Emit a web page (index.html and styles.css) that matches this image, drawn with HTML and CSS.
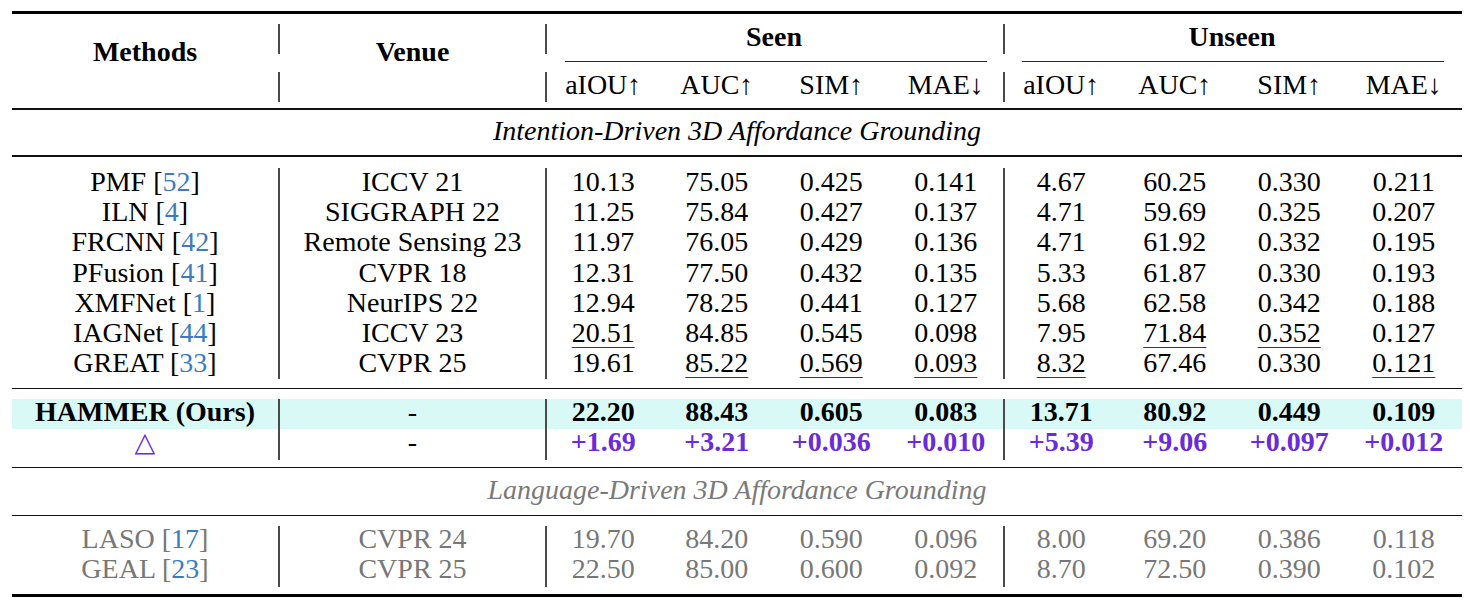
FILE: index.html
```html
<!DOCTYPE html>
<html>
<head>
<meta charset="utf-8">
<link rel="stylesheet" href="styles.css">
</head>
<body>
<div class="tbl">
  <div class="rule-thick top"></div>

  <div class="hd">
    <div class="h-meth">Methods</div>
    <div class="h-venue">Venue</div>
    <div class="h-seen">Seen</div>
    <div class="h-unseen">Unseen</div>
    <div class="cmid cmid-seen"></div>
    <div class="cmid cmid-unseen"></div>
    <div class="m c3">aIOU↑</div>
    <div class="m c4">AUC↑</div>
    <div class="m c5">SIM↑</div>
    <div class="m c6">MAE↓</div>
    <div class="m c7">aIOU↑</div>
    <div class="m c8">AUC↑</div>
    <div class="m c9">SIM↑</div>
    <div class="m c10">MAE↓</div>
    <i class="vb r1 c2"></i><i class="vb r1 c3"></i><i class="vb r1 c7"></i>
    <i class="vb r3 c2"></i><i class="vb r3 c3"></i><i class="vb r3 c7"></i>
  </div>

  <div class="rule"></div>
  <div class="title">Intention-Driven 3D Affordance Grounding</div>
  <div class="rule"></div>

  <div class="block data">
    <div class="row"><span>PMF [<a class="cite">52</a>]</span><span class="bl">ICCV 21</span><span class="bl">10.13</span><span>75.05</span><span>0.425</span><span>0.141</span><span class="bl">4.67</span><span>60.25</span><span>0.330</span><span>0.211</span></div>
    <div class="row"><span>ILN [<a class="cite">4</a>]</span><span class="bl">SIGGRAPH 22</span><span class="bl">11.25</span><span>75.84</span><span>0.427</span><span>0.137</span><span class="bl">4.71</span><span>59.69</span><span>0.325</span><span>0.207</span></div>
    <div class="row"><span>FRCNN [<a class="cite">42</a>]</span><span class="bl">Remote Sensing 23</span><span class="bl">11.97</span><span>76.05</span><span>0.429</span><span>0.136</span><span class="bl">4.71</span><span>61.92</span><span>0.332</span><span>0.195</span></div>
    <div class="row"><span>PFusion [<a class="cite">41</a>]</span><span class="bl">CVPR 18</span><span class="bl">12.31</span><span>77.50</span><span>0.432</span><span>0.135</span><span class="bl">5.33</span><span>61.87</span><span>0.330</span><span>0.193</span></div>
    <div class="row"><span>XMFNet [<a class="cite">1</a>]</span><span class="bl">NeurIPS 22</span><span class="bl">12.94</span><span>78.25</span><span>0.441</span><span>0.127</span><span class="bl">5.68</span><span>62.58</span><span>0.342</span><span>0.188</span></div>
    <div class="row"><span>IAGNet [<a class="cite">44</a>]</span><span class="bl">ICCV 23</span><span class="bl"><u>20.51</u></span><span>84.85</span><span>0.545</span><span>0.098</span><span class="bl">7.95</span><span><u>71.84</u></span><span><u>0.352</u></span><span>0.127</span></div>
    <div class="row"><span>GREAT [<a class="cite">33</a>]</span><span class="bl">CVPR 25</span><span class="bl">19.61</span><span><u>85.22</u></span><span><u>0.569</u></span><span><u>0.093</u></span><span class="bl"><u>8.32</u></span><span>67.46</span><span>0.330</span><span><u>0.121</u></span></div>
  </div>

  <div class="rule"></div>

  <div class="block ours">
    <div class="row hl"><span class="b">HAMMER (Ours)</span><span class="bl">-</span><span class="bl b">22.20</span><span class="b">88.43</span><span class="b">0.605</span><span class="b">0.083</span><span class="bl b">13.71</span><span class="b">80.92</span><span class="b">0.449</span><span class="b">0.109</span></div>
    <div class="row delta"><span class="tri">△</span><span class="bl">-</span><span class="bl p">+1.69</span><span class="p">+3.21</span><span class="p">+0.036</span><span class="p">+0.010</span><span class="bl p">+5.39</span><span class="p">+9.06</span><span class="p">+0.097</span><span class="p">+0.012</span></div>
  </div>

  <div class="rule"></div>
  <div class="title gray">Language-Driven 3D Affordance Grounding</div>
  <div class="rule"></div>

  <div class="block lang">
    <div class="row"><span>LASO [<a class="cite">17</a>]</span><span class="bl">CVPR 24</span><span class="bl">19.70</span><span>84.20</span><span>0.590</span><span>0.096</span><span class="bl">8.00</span><span>69.20</span><span>0.386</span><span>0.118</span></div>
    <div class="row"><span>GEAL [<a class="cite">23</a>]</span><span class="bl">CVPR 25</span><span class="bl">22.50</span><span>85.00</span><span>0.600</span><span>0.092</span><span class="bl">8.70</span><span>72.50</span><span>0.390</span><span>0.102</span></div>
  </div>

  <div class="rule-thick bottom"></div>
</div>
</body>
</html>
```

FILE: styles.css
```css
:root {
  --cols: 266px 267px repeat(8, 114.5px);
  --bar: #4a4a4a;
}

html, body {
  margin: 0;
  padding: 0;
  background: #ffffff;
}

body {
  font-family: "Liberation Serif", "Times New Roman", serif;
  font-size: 28px;
  color: #000;
}

.tbl {
  width: 1450px;
  margin-left: 12px;
  padding-top: 11px;
}

.rule-thick {
  height: 3px;
  background: #000;
}

.rule {
  height: 1.5px;
  background: #111;
}

/* header */
.hd {
  display: grid;
  grid-template-columns: var(--cols);
  grid-template-rows: 47px 1px 46px;
}

.hd > div {
  text-align: center;
  line-height: 30px;
}

.h-meth {
  grid-area: 1 / 1 / 4 / 2;
  padding-top: 23px;
  font-weight: bold;
}

.h-venue {
  grid-area: 1 / 2 / 4 / 3;
  padding-top: 23px;
  padding-left: 2px;
  font-weight: bold;
}

.h-seen {
  grid-area: 1 / 3 / 2 / 7;
  padding-top: 7.5px;
  font-weight: bold;
}

.h-unseen {
  grid-area: 1 / 7 / 2 / 11;
  padding-top: 7.5px;
  font-weight: bold;
}

.hd > .cmid {
  grid-row: 2;
  background: #2a2a2a;
  height: 1px;
}

.cmid-seen {
  grid-column: 3 / 7;
  margin: 0 16px 0 20px;
}

.cmid-unseen {
  grid-column: 7 / 11;
  margin: 0 17px 0 19px;
}

.hd > .m {
  grid-row: 3;
  padding-top: 7.5px;
}

.m.c3, .m.c7 { padding-left: 2px; }

.c2 { grid-column: 2; }
.c3 { grid-column: 3; }
.c4 { grid-column: 4; }
.c5 { grid-column: 5; }
.c6 { grid-column: 6; }
.c7 { grid-column: 7; }
.c8 { grid-column: 8; }
.c9 { grid-column: 9; }
.c10 { grid-column: 10; }

.vb {
  display: block;
  justify-self: start;
  align-self: start;
  width: 2px;
  height: 30px;
  margin-top: 10px;
  background: var(--bar);
}

.vb.r1 { grid-row: 1; }
.vb.r3 { grid-row: 3; }

/* section titles */
.title {
  font-style: italic;
  text-align: center;
  line-height: 30px;
  padding-top: 6.5px;
  height: 30px;
  padding-bottom: 9px;
}

.title.gray {
  color: #7a7a7a;
  padding-bottom: 10px;
}

/* body rows */
.row {
  display: grid;
  grid-template-columns: var(--cols);
}

.row > span {
  text-align: center;
  white-space: nowrap;
}

.bl {
  border-left: 2px solid var(--bar);
}

.cite {
  color: #3a7cc4;
}

u {
  text-decoration-thickness: 1px;
  text-underline-offset: 5px;
  text-decoration-color: #3a3a3a;
}

.data {
  padding-top: 11.5px;
  padding-bottom: 8.6px;
}

.data .row {
  height: 30.2px;
}

.data .row > span {
  line-height: 27.2px;
}

.ours {
  padding-top: 9.5px;
  padding-bottom: 8px;
}

.ours .row {
  height: 30px;
}

.ours .row > span {
  line-height: 26px;
}

.ours .row:last-child > .bl {
  margin-bottom: -1px;
}

.hl {
  background: #d9f9f7;
}

.b {
  font-weight: bold;
}

.p {
  font-weight: bold;
  color: #6a2bd8;
}

.tri {
  color: #6a2bd8;
  font-family: "DejaVu Sans", sans-serif;
  font-size: 27px;
}

.lang {
  padding-top: 9.5px;
  padding-bottom: 7px;
  color: #777777;
}

.lang .row {
  height: 30.3px;
}

.lang .row > span {
  line-height: 25.5px;
}
```
